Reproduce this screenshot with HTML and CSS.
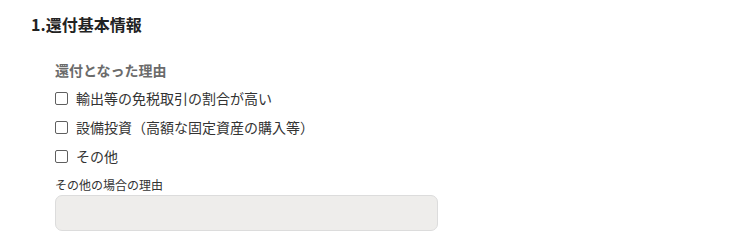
FILE: index.html
```html
<!DOCTYPE html>
<html lang="ja">
<head>
<meta charset="utf-8">
<link rel="stylesheet" href="styles.css">
</head>
<body>
<section class="section">
  <h2 class="section-title">1.還付基本情報</h2>
  <div class="section-body">
    <div class="field-label">還付となった理由</div>
    <div class="checks">
      <label class="check"><span class="box"></span><span class="check-text">輸出等の免税取引の割合が高い</span></label>
      <label class="check"><span class="box"></span><span class="check-text">設備投資（高額な固定資産の購入等）</span></label>
      <label class="check"><span class="box"></span><span class="check-text">その他</span></label>
    </div>
    <div class="sub-label">その他の場合の理由</div>
    <div class="input-disabled"></div>
  </div>
</section>
</body>
</html>
```
FILE: styles.css
```css
html, body {
  margin: 0;
  padding: 0;
  background: #ffffff;
}
body {
  font-family: "Noto Sans CJK JP", "Noto Sans", sans-serif;
  color: #333333;
}
.section {
  padding: 12px 0 0 31px;
}
.section-title {
  margin: 0;
  font-size: 16px;
  line-height: 24px;
  font-weight: 700;
  color: #222222;
}
.section-body {
  padding-left: 24px;
  margin-top: 24px;
}
.field-label {
  font-size: 14px;
  line-height: 20px;
  font-weight: 700;
  color: #6b6b6b;
}
.checks {
  display: flex;
  flex-direction: column;
  gap: 9px;
  margin-top: 8px;
}
.check {
  display: flex;
  align-items: center;
  height: 20px;
  font-size: 14px;
  line-height: 20px;
  color: #333333;
}
.box {
  width: 11px;
  height: 11px;
  border: 1px solid #5f5f5f;
  border-radius: 2px;
  background: #ffffff;
  flex: none;
}
.check-text {
  margin-left: 8px;
}
.sub-label {
  margin-top: 11px;
  font-size: 12px;
  line-height: 16px;
  color: #333333;
}
.input-disabled {
  margin-top: 2px;
  width: 381px;
  height: 34px;
  border: 1px solid #dcdcdc;
  border-radius: 7px;
  background: #eeedeb;
}
```
